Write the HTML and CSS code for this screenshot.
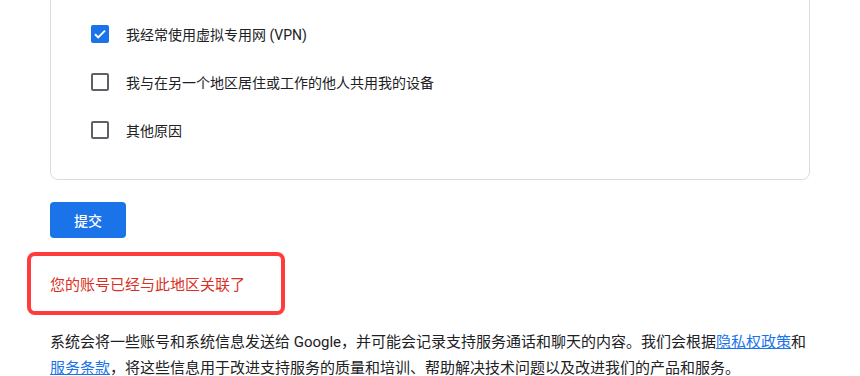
FILE: index.html
```html
<!DOCTYPE html>
<html lang="zh-CN">
<head>
    <meta charset="UTF-8">
    <meta name="viewport" content="width=device-width, initial-scale=1.0">
    <title>账号所在地区</title>
    <link rel="stylesheet" href="styles.css">
</head>
<body>
    <div class="page">
        <div class="card">
            <label class="option">
                <span class="box checked">
                    <svg viewBox="0 0 18 18" width="18" height="18"><path d="M4 9.2l3.2 3.2L14 5.6" fill="none" stroke="#fff" stroke-width="2"/></svg>
                </span>
                <span class="option-text">我经常使用虚拟专用网 (VPN)</span>
            </label>
            <label class="option">
                <span class="box"></span>
                <span class="option-text">我与在另一个地区居住或工作的他人共用我的设备</span>
            </label>
            <label class="option">
                <span class="box"></span>
                <span class="option-text">其他原因</span>
            </label>
        </div>

        <button class="submit">提交</button>

        <div class="notice">您的账号已经与此地区关联了</div>

        <p class="disclaimer">系统会将一些账号和系统信息发送给 Google，并可能会记录支持服务通话和聊天的内容。我们会根据<a href="#">隐私权政策</a>和<a href="#">服务条款</a>，将这些信息用于改进支持服务的质量和培训、帮助解决技术问题以及改进我们的产品和服务。</p>
    </div>
</body>
</html>
```

FILE: styles.css
```css
body {
    margin: 0;
    background: #fff;
    font-family: Roboto, "Noto Sans CJK SC", sans-serif;
    color: #202124;
}
.page {
    padding: 0 50px;
    width: 760px;
}
.card {
    margin-top: -31px;
    border: 1px solid #dadce0;
    border-radius: 8px;
    padding: 40px 40px 25px;
}
.option {
    display: flex;
    align-items: center;
    height: 48px;
    font-size: 14px;
}
.box {
    width: 18px;
    height: 18px;
    box-sizing: border-box;
    border: 2px solid #5f6368;
    border-radius: 2px;
    margin-right: 17px;
    display: flex;
}
.box.checked {
    border: none;
    background: #1a73e8;
}
.submit {
    margin-top: 22px;
    width: 76px;
    height: 36px;
    border: none;
    border-radius: 4px;
    background: #1a73e8;
    color: #fff;
    font-family: inherit;
    font-size: 14px;
    font-weight: 500;
    display: block;
}
.notice {
    margin: 14px 0 0 -23px;
    width: 231px;
    border: 4px solid #ff3b3b;
    border-radius: 8px;
    padding: 19px 0 16px 19px;
    line-height: 20px;
    font-size: 15px;
    color: #d93025;
}
.disclaimer {
    margin: 14px 0 0;
    font-size: 15px;
    line-height: 26px;
}
.disclaimer a {
    color: #1a73e8;
}
```
